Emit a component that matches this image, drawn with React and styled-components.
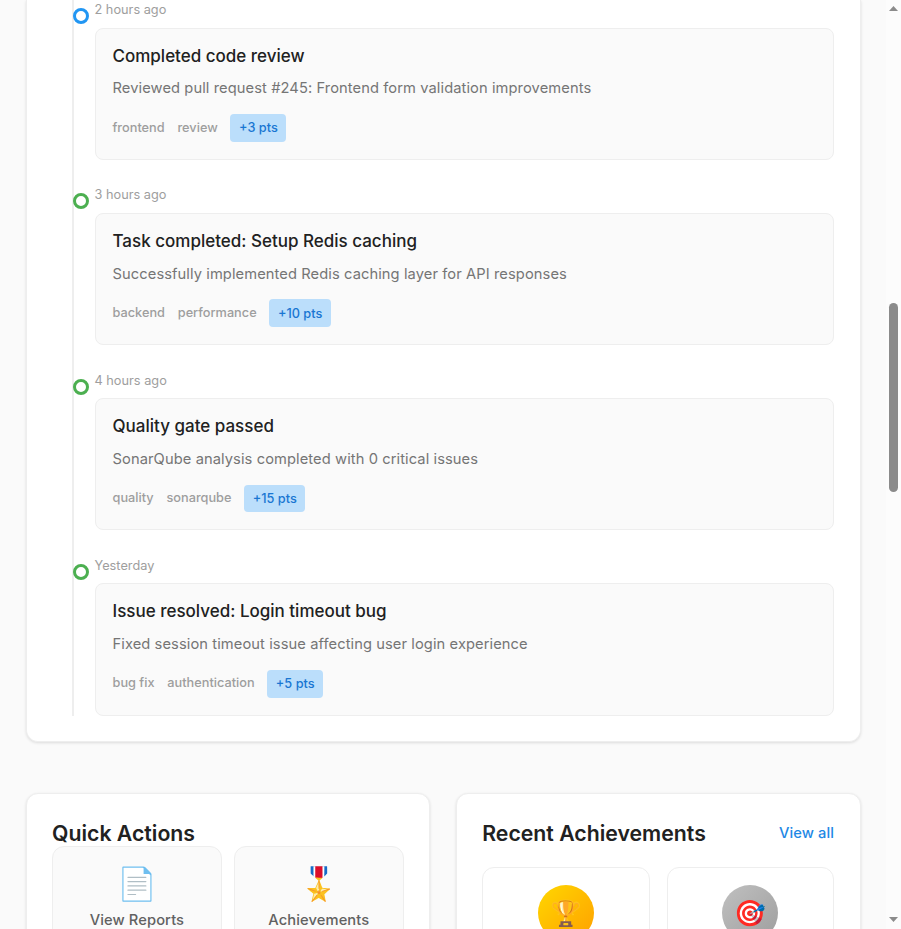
import React from 'react';
import styled, { createGlobalStyle } from 'styled-components';

const GlobalStyle = createGlobalStyle`
  *, *::before, *::after { box-sizing: border-box; }
  html { font-size: 17px; }
  body {
    margin: 0;
    overflow: hidden;
    background: #fafafa;
    font-family: Inter, "Noto Sans", sans-serif;
    line-height: 1.5;
    color: #212121;
  }
`;

const Window = styled.div`
  display: grid;
  grid-template-columns: 1fr 15px;
  height: 929px;
  overflow: hidden;
  background: #fafafa;
`;

const Page = styled.main`
  min-width: 0;
  height: 929px;
  padding: 0 1.5rem;
  overflow: hidden;
`;

const Panel = styled.section`
  min-width: 0;
  padding: 1.5rem;
  background: #fff;
  border: 1px solid #eee;
  border-radius: 12px;
  box-shadow: 0 1px 3px rgba(0, 0, 0, 0.12);
`;

const FeedPanel = styled(Panel)`
  height: 742.2px;
  padding-top: 0;
  border-top: 0;
  border-radius: 0 0 12px 12px;
`;

const Timeline = styled.div`
  height: 715.7px;
  margin-left: 20px;
  padding-top: 0.1px;
  padding-left: 20.5px;
  border-left: 2px solid #eee;
`;

const Entry = styled.article`
  position: relative;
  margin-bottom: 25.4px;
`;

const Marker = styled.span`
  position: absolute;
  top: 8.1px;
  left: -21.5px;
  width: 16px;
  height: 16px;
  background: #fff;
  border: 3px solid ${(p) => p.$color};
  border-radius: 50%;
`;

const Time = styled.div`
  margin-bottom: 0.5rem;
  font-size: 0.75rem;
  color: #9e9e9e;
`;

const EntryCard = styled.div`
  height: 132.2px;
  padding: 1rem;
  background: #fafafa;
  border: 1px solid #eee;
  border-radius: 8px;
`;

const EntryTitle = styled.h4`
  margin: 0 0 10.25px;
  font-size: 1rem;
  font-weight: 500;
  line-height: 1.2;
`;

const EntryText = styled.p`
  margin: 0 0 12.4px;
  font-size: 14.7px;
  line-height: 25.4px;
  letter-spacing: 0.085px;
  color: #757575;
`;

const Tags = styled.div`
  display: flex;
  align-items: center;
  gap: 0.75rem;
  font-size: 0.75rem;
  font-weight: 500;
  color: #9e9e9e;
`;

const Tag = styled.span`
  margin-bottom: 1.4px;
`;

const Points = styled.span`
  padding: 0.25rem 0.5rem 4.36px;
  color: #1976d2;
  background: #bbdefb;
  border-radius: 4px;
`;

const Lower = styled.div`
  display: grid;
  grid-template-columns: 1fr 1fr;
  gap: 1.5rem;
  margin-top: 3rem;
`;

const LowerPanel = styled(Panel)`
  height: 320px;
`;

const PanelHead = styled.header`
  display: flex;
  align-items: center;
  justify-content: space-between;
  height: 26.6px;
  margin-bottom: ${(p) => p.$gap}px;
`;

const PanelTitle = styled.h3`
  margin: 0;
  font-size: 1.25rem;
  font-weight: 600;
  line-height: 1.25;
`;

const ViewAll = styled.a`
  font-size: 14.7px;
  font-weight: 500;
  letter-spacing: 0.09px;
  color: #1e88e5;
`;

const Pair = styled.div`
  display: grid;
  grid-template-columns: 1fr 1fr;
  gap: ${(p) => p.$gap}px;
`;

const Action = styled.button`
  display: flex;
  flex-direction: column;
  align-items: center;
  height: 130px;
  padding: 16px;
  font-family: inherit;
  font-size: 14.7px;
  font-weight: 500;
  letter-spacing: 0.1px;
  color: #616161;
  background: #fafafa;
  border: 1px solid #eee;
  border-radius: 12px;
`;

const ActionIcon = styled.span`
  height: 48px;
  font-size: 32px;
  line-height: 42px;
`;

const Achievement = styled.div`
  display: flex;
  justify-content: center;
  height: 200px;
  padding-top: 1rem;
  background: #fff;
  border: 1px solid #eee;
  border-radius: 12px;
`;

const Badge = styled.div`
  width: 56px;
  height: 56px;
  font-size: 1.5rem;
  line-height: 56px;
  text-align: center;
  background: linear-gradient(135deg, ${(p) => p.$from}, ${(p) => p.$to});
  border-radius: 50%;
`;

const Scrollbar = styled.div`
  display: flex;
  flex-direction: column;
  align-items: center;
  justify-content: space-between;
  padding: 6px 0 7px;
  background: #fcfcfc;
`;

const Arrow = styled.svg`
  display: block;
  width: 9px;
  height: 5px;
  fill: #8b8b8b;
`;

const Track = styled.div`
  width: 9px;
  flex: 1;
  padding-top: 292px;
`;

const Thumb = styled.div`
  height: 189px;
  background: #8b8b8b;
  border-radius: 5px;
`;

const entries = [
  { time: '2 hours ago', color: '#2196f3', title: 'Completed code review', text: 'Reviewed pull request #245: Frontend form validation improvements', tags: ['frontend', 'review'], points: 3 },
  { time: '3 hours ago', color: '#4caf50', title: 'Task completed: Setup Redis caching', text: 'Successfully implemented Redis caching layer for API responses', tags: ['backend', 'performance'], points: 10 },
  { time: '4 hours ago', color: '#4caf50', title: 'Quality gate passed', text: 'SonarQube analysis completed with 0 critical issues', tags: ['quality', 'sonarqube'], points: 15 },
  { time: 'Yesterday', color: '#4caf50', title: 'Issue resolved: Login timeout bug', text: 'Fixed session timeout issue affecting user login experience', tags: ['bug fix', 'authentication'], points: 5 },
];

export default function App() {
  return (
    <>
      <GlobalStyle />
      <Window>
        <Page>
          <FeedPanel>
            <Timeline>
              {entries.map((e) => (
                <Entry key={e.title}>
                  <Marker $color={e.color} />
                  <Time>{e.time}</Time>
                  <EntryCard>
                    <EntryTitle>{e.title}</EntryTitle>
                    <EntryText>{e.text}</EntryText>
                    <Tags>
                      {e.tags.map((t) => <Tag key={t}>{t}</Tag>)}
                      <Points>+{e.points} pts</Points>
                    </Tags>
                  </EntryCard>
                </Entry>
              ))}
            </Timeline>
          </FeedPanel>
          <Lower>
            <LowerPanel>
              <PanelHead $gap={0}><PanelTitle>Quick Actions</PanelTitle></PanelHead>
              <Pair $gap={12}>
                <Action><ActionIcon>📄</ActionIcon>View Reports</Action>
                <Action><ActionIcon>🎖️</ActionIcon>Achievements</Action>
              </Pair>
            </LowerPanel>
            <LowerPanel>
              <PanelHead $gap={20.8}>
                <PanelTitle>Recent Achievements</PanelTitle>
                <ViewAll>View all</ViewAll>
              </PanelHead>
              <Pair $gap={17}>
                <Achievement><Badge $from="#ffd700" $to="#ffa000">🏆</Badge></Achievement>
                <Achievement><Badge $from="#c0c0c0" $to="#9e9e9e">🎯</Badge></Achievement>
              </Pair>
            </LowerPanel>
          </Lower>
        </Page>
        <Scrollbar>
          <Arrow viewBox="0 0 9 5"><path d="M0 5L4.5 0L9 5Z" /></Arrow>
          <Track><Thumb /></Track>
          <Arrow viewBox="0 0 9 5"><path d="M0 0H9L4.5 5Z" /></Arrow>
        </Scrollbar>
      </Window>
    </>
  );
}
